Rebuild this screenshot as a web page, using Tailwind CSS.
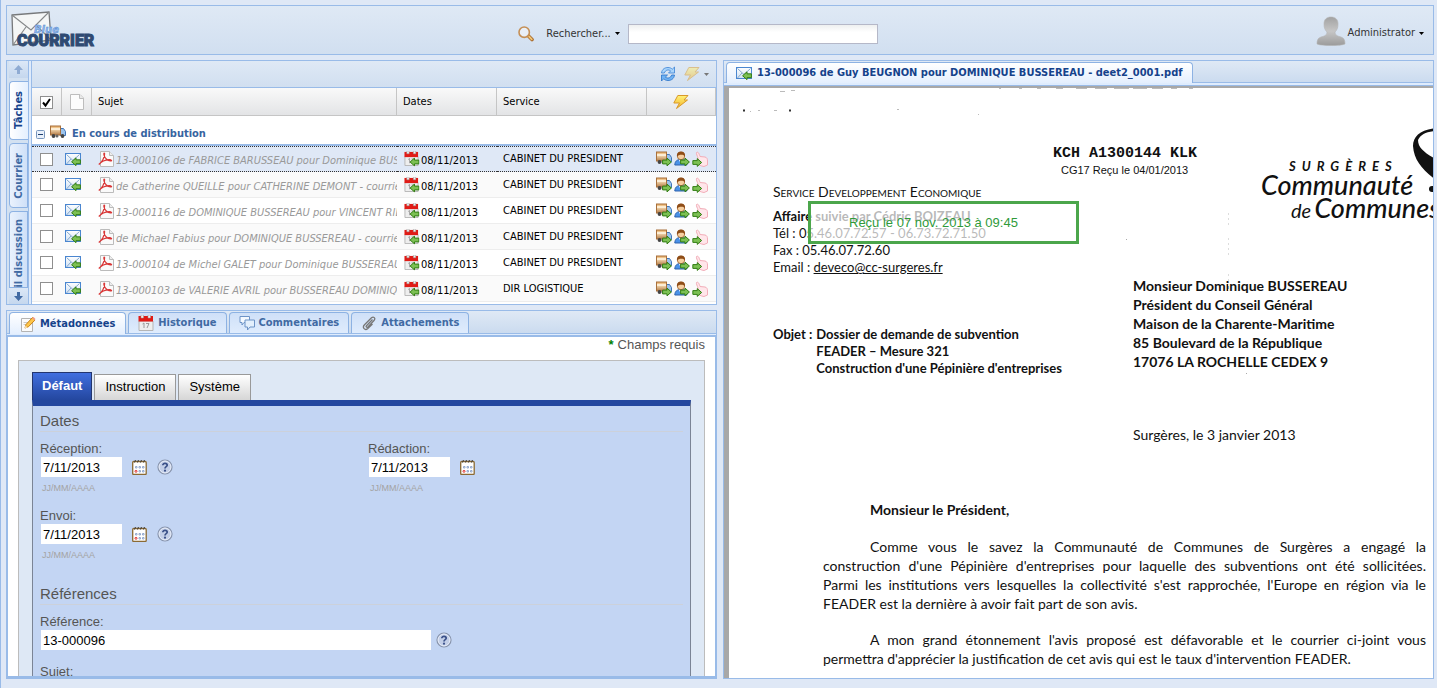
<!DOCTYPE html>
<html lang="fr">
<head>
<meta charset="utf-8">
<title>Blue Courrier</title>
<script src="https://cdn.jsdelivr.net/npm/@tailwindcss/browser@4"></script>
</head>
<body class="h-screen overflow-hidden bg-[#dfe8f6] font-['DejaVu_Sans_Condensed',Tahoma,sans-serif] text-[11px] leading-4 text-black">

<!-- Shared icons -->
<svg class="absolute size-0" aria-hidden="true">
  <defs>
    <linearGradient id="gMail" x1="0" y1="0" x2="0" y2="1"><stop offset="0" stop-color="#fff"/><stop offset="1" stop-color="#cfe0f2"/></linearGradient>
    <linearGradient id="gBolt" x1="0" y1="0" x2="0" y2="1"><stop offset="0" stop-color="#fff27a"/><stop offset="1" stop-color="#f5b325"/></linearGradient>
    <linearGradient id="gUser" x1="0" y1="0" x2="0" y2="1"><stop offset="0" stop-color="#a2a2a2"/><stop offset=".5" stop-color="#c6c6c6"/><stop offset="1" stop-color="#9b9b9b"/></linearGradient>
    <linearGradient id="gTruck" x1="0" y1="0" x2="0" y2="1"><stop offset="0" stop-color="#e8ac63"/><stop offset=".35" stop-color="#f6dcb4"/><stop offset="1" stop-color="#b27a45"/></linearGradient>
  </defs>
  <symbol id="arrowL" viewBox="0 0 10 9"><path d="M.6 4.5 5 .6V2.6H9.4V6.4H5V8.4Z" fill="#7cc053" stroke="#327d14"/></symbol>
  <symbol id="arrowR" viewBox="0 0 10 9"><path d="M9.4 4.5 5 .6V2.6H.6V6.4H5V8.4Z" fill="#7cc053" stroke="#327d14"/></symbol>
  <symbol id="mail" viewBox="0 0 17 15">
    <rect x=".5" y="1.5" width="15" height="11" fill="url(#gMail)" stroke="#4a86d0"/>
    <path d="M1.5 2.5 8 8.5 14.5 2.5M1.5 12 6 7M14.5 12 10 7" fill="none" stroke="#86a9cf"/>
    <use href="#arrowL" x="6" y="5" width="10" height="9.5"/>
  </symbol>
  <symbol id="page" viewBox="0 0 14 16">
    <path d="M.5.5H10L13.5 4V15.5H.5Z" fill="#fcfcfc" stroke="#bdbdbd"/><path d="M9.5.5V4.5H13.5" fill="#e9e9e9" stroke="#bdbdbd"/>
  </symbol>
  <symbol id="pdf" viewBox="0 0 16 16">
    <path d="M2.5.5H11.5L15.5 4.5V15.5H2.5Z" fill="#fafafa" stroke="#bbb"/><path d="M11.5.5V4.5H15.5" fill="#eee" stroke="#bbb"/>
    <path d="M.8 13.5C3.5 11.5 7 6.500 6.600 2.700C6.400 1.500 5.600 2.200 5.900 3.600C6.500 7 9.500 9.800 12.500 10C14.500 10 13.500 8.600 11 8.700C7.500 8.900 3.500 10.500.8 13.500Z" fill="none" stroke="#d93636" stroke-width="1.200"/>
  </symbol>
  <symbol id="cal" viewBox="0 0 16 16">
    <path d="M1 6H15V15.500H1Z" fill="#eee" stroke="#b5b5b5"/><path d="M.5 1H15V6.500H.5Z" fill="#e01b16"/>
    <path d="M3 0H5.500V3H3ZM10 0H12.500V3H10Z" fill="#f2f2f2" stroke="#999" stroke-width=".5"/>
    <path d="M4.500 9 6 8V13M8 8.500H11L9 13" fill="none" stroke="#9a9a9a" stroke-width="1"/>
  </symbol>
  <symbol id="calIn" viewBox="0 0 16 16"><use href="#cal" width="15" height="15"/><use href="#arrowL" x="5.500" y="6.500" width="10" height="9"/></symbol>
  <symbol id="truck" viewBox="0 0 16 14">
    <path d="M10 3.500H13.500L15.500 6.500V10.500H10Z" fill="#9cc4ee" stroke="#3f74b8"/>
    <rect x=".5" y="1" width="10" height="9" fill="url(#gTruck)" stroke="#a8703d"/><path d="M1 4H10" stroke="#fff6e4" stroke-width="1.500"/>
    <circle cx="3.500" cy="11" r="1.900" fill="#444"/><circle cx="12.500" cy="11" r="1.900" fill="#444"/><circle cx="7" cy="11" r="1.500" fill="#666"/>
  </symbol>
  <symbol id="truckOut" viewBox="0 0 16 16"><use href="#truck" width="16" height="14"/><use href="#arrowR" x="6" y="6.500" width="10" height="9"/></symbol>
  <symbol id="userOut" viewBox="0 0 16 16">
    <path d="M.8 14C1 10 3 8.500 7 8.500S12.500 10 13 14Z" fill="#4a92e8" stroke="#2e62ad"/><path d="M5 9 7 13 9 9Z" fill="#fff"/>
    <circle cx="7" cy="5" r="3.700" fill="#f6cfa0" stroke="#9a5a22" stroke-width=".800"/><path d="M3 5.500C2.500 1.500 5 .500 7 .500S11.500 1.500 11 5.500C10 3 5 3 3 5.500Z" fill="#8f4d17"/>
    <use href="#arrowR" x="6" y="6.500" width="10" height="9"/>
  </symbol>
  <symbol id="handOut" viewBox="0 0 16 16">
    <path d="M4.500 1.500C6 .500 7 2 8 5.500L13 6C15 6.500 15.500 8 15.500 10V14L12 15.500C9 15 6 14 5.500 12L6 7C5.500 5 4 3 4.500 1.500Z" fill="#ffe6ea" stroke="#f2adb8"/>
    <use href="#arrowR" x="0" y="7" width="10.500" height="9"/>
  </symbol>
  <symbol id="bolt" viewBox="0 0 16 16"><path d="M4.800 1.500H15L11 6H14.500L3.500 14.500 6.500 9H.800Z" fill="url(#gBolt)" stroke="#d9992a" stroke-linejoin="round"/></symbol>
  <symbol id="datePick" viewBox="0 0 15 16">
    <rect x=".700" y="2.500" width="13.500" height="13" rx="1" fill="#fff" stroke="#8b6a33" stroke-width="1.300"/>
    <path d="M2.500 3.500 3.500 1M5.500 3.500 6.500 1M8.500 3.500 9.500 1M11.500 3.500 12.500 1" fill="none" stroke="#333" stroke-width=".9"/>
    <path d="M3.500 7.500H5V9H3.500ZM7 7.500H8.500V9H7ZM10.500 7.500H12V9H10.500ZM7 11.500H8.500V13H7ZM10.500 11.500H12V13H10.500Z" fill="#fff" stroke="#8aa3cc" stroke-width=".900"/>
    <circle cx="4" cy="12.300" r="1" fill="#fff" stroke="#e02b2b"/>
  </symbol>
  <symbol id="help" viewBox="0 0 16 16">
    <circle cx="8" cy="8" r="7" fill="#c3cfe8" stroke="#8793ab" stroke-width="1.200"/><circle cx="8" cy="8" r="5.900" fill="none" stroke="#e5ebf7"/>
    <path d="M5.800 6.300C5.800 3.800 10.200 3.800 10.200 6.300C10.200 7.700 8 7.700 8 9.500" fill="none" stroke="#3a5088" stroke-width="1.700"/><circle cx="8" cy="11.700" r="1.100" fill="#3a5088"/>
  </symbol>
</svg>

<div class="flex h-full flex-col gap-[5px] border-l border-[#99bbe8] pt-[5px] pr-[3px] pb-[9px] pl-[5px]">

  <!-- Banner -->
  <header class="grid h-[50px] shrink-0 grid-cols-[1fr_auto_1fr] items-center border border-[#99bbe8] bg-linear-to-b from-[#dfe9f5] to-[#d1dff0]">
    <a href="#" aria-label="Blue Courrier" class="ml-1 w-[90px]">
      <svg class="h-[40px] w-[90px]" viewBox="0 0 90 40">
        <path d="M1 5 38 2 40 30 2 35Z" fill="#f4f6f6" stroke="#77797b" stroke-width="1.300"/>
        <path d="M1 5 20 20 38 2M2 35 15 17M40 30 25 15" fill="none" stroke="#85888a" stroke-width="1.100"/>
        <text x="6" y="36" font-family="Roboto, sans-serif" font-weight="900" font-size="16" fill="#2f4a72" stroke="#2f4a72" stroke-width="1">COURRIER</text>
        <text x="23" y="23" font-family="DejaVu Sans, sans-serif" font-weight="700" font-style="italic" font-size="10" fill="#8fb8ee" stroke="#4f83c9" stroke-width=".400">Blue</text>
      </svg>
    </a>
    <form class="mt-[7px] mr-[44px] flex items-center">
      <svg class="mr-3 size-4" viewBox="0 0 16 16"><path d="M10.500 10 14 13.500" stroke="#a8692c" stroke-width="3.600" stroke-linecap="round"/><path d="M11 10.500 13.800 13.300" stroke="#f0c574" stroke-width="1.800" stroke-linecap="round"/><circle cx="6.200" cy="6.200" r="5.200" fill="#e9eff7" stroke="#c58f55" stroke-width="1.600"/></svg>
      <button type="button" class="flex items-center gap-1 text-[#333]">Rechercher...<svg class="h-[3px] w-[5px]" viewBox="0 0 5 3"><path d="M0 0H5L2.500 3Z" fill="#000"/></svg></button>
      <input type="text" aria-label="Rechercher" class="ml-2 h-5 w-[250px] border border-[#b5b8c8] bg-linear-to-b from-[#eef0f0] to-white to-40% px-1">
    </form>
    <button type="button" class="mr-[9px] flex items-center gap-1 justify-self-end pt-[2px] text-[#333]">
      <svg class="h-[30px] w-[30px]" viewBox="0 0 30 30"><path d="M8 8C8 3 11 1 15 1S22 3 22 8C22 12 21 14 19 16C19 19 21 20 25 21C28 22 29 24 29 28C25 30 5 30 1 28C1 24 2 22 5 21C9 20 11 19 11 16C9 14 8 12 8 8Z" fill="url(#gUser)" stroke="#b3b3b3" stroke-width=".600"/></svg>
      <span class="-ml-[2px] pt-1">Administrator</span><svg class="mt-1 h-[3px] w-[5px]" viewBox="0 0 5 3"><path d="M0 0H5L2.500 3Z" fill="#000"/></svg>
    </button>
  </header>

  <div class="grid min-h-0 flex-1 grid-cols-2 gap-[6px]">

    <div class="flex min-h-0 min-w-0 flex-col gap-[5px]">

      <!-- Task list with its vertical tabs -->
      <section class="flex h-[245px] shrink-0 border border-[#99bbe8]">
        <nav class="flex w-[25px] shrink-0 flex-col border-r border-[#99bbe8] bg-[#dfebfb]">
          <div class="mr-[2px] flex min-h-0 flex-1 flex-col gap-[3px] overflow-hidden border-r border-[#99bbe8] bg-[#d3e1f1] pl-[2px]">
            <button type="button" aria-label="Monter" class="grid h-[17px] shrink-0 place-items-center bg-linear-to-b from-[#dce8f7] to-[#c5d7ee]"><svg class="size-[9px]" viewBox="0 0 9 9"><path d="M4.500 0 9 5H6V9H3V5H0Z" fill="#8fabd3"/></svg></button>
            <button type="button" class="flex h-[59px] shrink-0 items-center justify-center rounded-l border border-r-0 border-[#8db2e3] bg-linear-to-r from-white to-[#e4effe] font-bold text-[#15428b]"><span class="rotate-180 [writing-mode:vertical-rl]">Tâches</span></button>
            <button type="button" class="flex h-[65px] shrink-0 items-center justify-center rounded-l border border-[#8db2e3] bg-linear-to-r from-[#eaf2fd] to-[#cfe0f8] font-bold text-[#416aa3]"><span class="rotate-180 [writing-mode:vertical-rl]">Courrier</span></button>
            <button type="button" class="flex min-h-0 flex-1 items-start justify-center overflow-hidden rounded-tl border border-b-0 border-[#8db2e3] bg-linear-to-r from-[#eaf2fd] to-[#cfe0f8] pt-[7px] font-bold text-[#416aa3]"><span class="rotate-180 whitespace-nowrap [writing-mode:vertical-rl]">il discussion</span></button>
            <button type="button" aria-label="Descendre" class="-mt-[3px] grid h-[17px] shrink-0 place-items-center border-t border-[#8db2e3] bg-linear-to-b from-[#dce8f7] to-[#c5d7ee]"><svg class="size-[9px]" viewBox="0 0 9 9"><path d="M4.500 9 9 4H6V0H3V4H0Z" fill="#416aa3"/></svg></button>
          </div>
        </nav>

        <div class="flex min-w-0 flex-1 flex-col overflow-hidden bg-white">
          <div class="flex h-[27px] shrink-0 items-center justify-end border-b border-[#99bbe8] bg-linear-to-b from-[#dfe9f5] to-[#d1dff0] pr-[7px]">
            <button type="button" aria-label="Actualiser" class="mr-2"><svg class="size-4" viewBox="0 0 16 16"><path d="M1.500 7C2 3 5 1.500 8 1.500C10 1.500 11.300 2.200 12.300 3.200L14.500 1V7H8.500L10.600 4.900C8.500 3.200 5.500 3.800 4.300 7Z" fill="#a9d4fb" stroke="#3a82d4" stroke-width=".800"/><path d="M14.500 9C14 13 11 14.500 8 14.500C6 14.500 4.700 13.800 3.700 12.800L1.500 15V9H7.500L5.400 11.100C7.500 12.800 10.500 12.200 11.700 9Z" fill="#6fb2f3" stroke="#2a72c8" stroke-width=".800"/></svg></button>
            <button type="button" aria-label="Actions" disabled class="flex items-center gap-1"><svg class="size-4 opacity-50"><use href="#bolt"/></svg><svg class="h-[3px] w-[5px]" viewBox="0 0 5 3"><path d="M0 0H5L2.500 3Z" fill="#777"/></svg></button>
          </div>

          <table class="w-full table-fixed border-separate border-spacing-0 text-left">
            <colgroup><col class="w-[30px]"><col class="w-[30px]"><col class="w-[305px]"><col class="w-[100px]"><col class="w-[150px]"><col></colgroup>
            <thead>
              <tr class="h-7 [&>th]:border-r [&>th]:border-b [&>th]:border-[#c5c5c5] [&>th]:bg-linear-to-b [&>th]:from-[#f9f9f9] [&>th]:to-[#e3e4e6] [&>th]:p-0 [&>th]:pt-px [&>th]:font-normal">
                <th><span class="ml-2 grid size-[13px]"><input type="checkbox" checked aria-label="Tout sélectionner" class="peer col-start-1 row-start-1 size-[13px] appearance-none border border-[#8f8f8f] bg-white"><svg class="pointer-events-none col-start-1 row-start-1 size-[13px] opacity-0 peer-checked:opacity-100" viewBox="0 0 13 13"><path d="M3 6.500 5.500 9.500 10 3" fill="none" stroke="#000" stroke-width="2"/></svg></span></th>
                <th aria-label="Type"><svg class="mx-auto h-4 w-[14px]"><use href="#page"/></svg></th>
                <th><span class="pl-[6px]">Sujet</span></th>
                <th><span class="pl-[6px]">Dates</span></th>
                <th><span class="pl-[6px]">Service</span></th>
                <th aria-label="Actions"><svg class="mx-auto size-4"><use href="#bolt"/></svg></th>
              </tr>
            </thead>
            <tbody id="rows">
              <tr class="h-[30px]">
                <th colspan="6" class="border-b-2 border-[#99bbe8] p-0 pt-2 text-[#3764a0]">
                  <span class="flex items-center pl-1">
                    <button type="button" aria-label="Réduire le groupe" class="mr-[5px]"><svg class="size-[9px]" viewBox="0 0 9 9"><rect x=".500" y=".500" width="8" height="8" rx="1" fill="#e8f0fb" stroke="#7896bd"/><path d="M2 4.500H7" stroke="#1d3f6f"/></svg></button>
                    <svg class="mr-[6px] mb-1 h-[14px] w-4"><use href="#truck"/></svg>En cours de distribution
                  </span>
                </th>
              </tr>
            </tbody>
          </table>
        </div>
      </section>

      <!-- Record details -->
      <section class="flex min-h-0 flex-1 flex-col border border-[#99bbe8]">
        <nav class="flex h-[23px] shrink-0 items-end gap-[2px] border-b border-[#99bbe8] bg-linear-to-b from-[#dfe9f5] to-[#cbdbef] pl-[2px] font-bold text-[#416aa3]">
          <button type="button" class="-mb-px flex h-[22px] items-center rounded-t border border-b-0 border-[#8db2e3] bg-linear-to-b from-white to-[#e4effe] px-[10px] text-[#15428b]"><svg class="mr-1 size-4" viewBox="0 0 16 16"><path d="M1.500 2.500H12.500V15.500H1.500Z" fill="#fbfbfb" stroke="#b3b3b3"/><path d="M3.500 6.500H9M3.500 8.500H7" stroke="#ccc"/><path d="M5 12 6 8.500 12.500 1.500 15 4 8.500 10.700Z" fill="#fdc64b" stroke="#c98216"/><path d="M12 2 14.500 4.500 15.500 3 13.500 1Z" fill="#f09a86"/><path d="M4.500 12.500 5.500 9.500 7.500 11.500Z" fill="#f5deb5"/></svg>Métadonnées</button>
          <button type="button" class="flex h-[21px] items-center rounded-t border border-b-0 border-[#8db2e3] bg-linear-to-b from-[#cfe0f8] to-[#dfecfd] px-[9px]"><svg class="mr-1 size-4"><use href="#cal"/></svg>Historique</button>
          <button type="button" class="flex h-[21px] items-center rounded-t border border-b-0 border-[#8db2e3] bg-linear-to-b from-[#cfe0f8] to-[#dfecfd] px-[9px]"><svg class="mr-1 size-4" viewBox="0 0 16 16"><path d="M1 1.500H10.500V7.500H5L3 10V7.500H1Z" fill="#f4f9ff" stroke="#6d93c6" stroke-linejoin="round"/><path d="M6 5H15.500V12H11L8.500 15V12H6Z" fill="#e3effc" stroke="#6d93c6" stroke-linejoin="round"/></svg>Commentaires</button>
          <button type="button" class="flex h-[21px] items-center rounded-t border border-b-0 border-[#8db2e3] bg-linear-to-b from-[#cfe0f8] to-[#dfecfd] px-[9px]"><svg class="mr-1 size-4" viewBox="0 0 16 16"><path d="M11.500 4.500 5.500 10.700C4.500 11.800 5.800 13 6.900 12L13 5.500C15 3.300 12.500 1 10.500 2.800L3.500 9.800C.800 12.500 4 16 6.800 13.500L11.500 9" fill="none" stroke="#777" stroke-width="1.300"/></svg>Attachements</button>
        </nav>
        <div class="h-px shrink-0 bg-[#dfecfd]"></div>
        <div class="min-h-0 flex-1 overflow-hidden border-x border-y-2 border-[#99bbe8] bg-white px-[10px] font-['Liberation_Sans',Arial,sans-serif] text-[13px] text-[#555]">
          <p class="text-right"><span class="mr-1 font-bold text-[#008000]">*</span>Champs requis</p>
          <div class="mt-[7px] border border-[#bcbcbc] bg-[#dee8f5] px-[13px] pt-[11px]">
            <div class="flex items-end gap-[2px] text-black">
              <button type="button" class="h-7 border border-b-0 border-[#23356e] bg-linear-to-b from-[#416fdf] to-[#24479f] px-[9px] pb-[2px] font-bold text-white">Défaut</button>
              <button type="button" class="h-[26px] border border-b-0 border-[#999] bg-linear-to-b from-white to-[#d6d6d6] px-[10px] pb-[2px]">Instruction</button>
              <button type="button" class="h-[26px] border border-b-0 border-[#999] bg-linear-to-b from-white to-[#d6d6d6] px-[10px] pb-[2px]">Système</button>
            </div>
            <form class="border-x border-t-[6px] border-x-[#7b8495] border-t-[#24479f] bg-[#c3d5f3] px-[7px] pt-[7px] pb-8">
              <h2 class="border-b border-[#ccd1da] pb-[2px] text-[15px]">Dates</h2>
              <div class="mt-[9px] grid grid-cols-[328px_1fr] gap-y-3">
                <div>
                  <label for="reception" class="block">Réception:</label>
                  <div class="flex items-center"><input id="reception" value="7/11/2013" class="ml-px h-5 w-[81px] bg-white px-[2px] text-black"><button type="button" aria-label="Choisir une date" class="ml-[10px]"><svg class="h-4 w-[15px]"><use href="#datePick"/></svg></button><button type="button" aria-label="Aide" class="ml-[10px]"><svg class="size-4"><use href="#help"/></svg></button></div>
                  <p class="mt-[3px] pl-[2px] text-[9px] text-[#a3a3a3]">JJ/MM/AAAA</p>
                </div>
                <div>
                  <label for="redaction" class="block">Rédaction:</label>
                  <div class="flex items-center"><input id="redaction" value="7/11/2013" class="ml-px h-5 w-[81px] bg-white px-[2px] text-black"><button type="button" aria-label="Choisir une date" class="ml-[10px]"><svg class="h-4 w-[15px]"><use href="#datePick"/></svg></button></div>
                  <p class="mt-[3px] pl-[2px] text-[9px] text-[#a3a3a3]">JJ/MM/AAAA</p>
                </div>
                <div>
                  <label for="envoi" class="block">Envoi:</label>
                  <div class="flex items-center"><input id="envoi" value="7/11/2013" class="ml-px h-5 w-[81px] bg-white px-[2px] text-black"><button type="button" aria-label="Choisir une date" class="ml-[10px]"><svg class="h-4 w-[15px]"><use href="#datePick"/></svg></button><button type="button" aria-label="Aide" class="ml-[10px]"><svg class="size-4"><use href="#help"/></svg></button></div>
                  <p class="mt-[3px] pl-[2px] text-[9px] text-[#a3a3a3]">JJ/MM/AAAA</p>
                </div>
              </div>
              <h2 class="mt-[23px] border-b border-[#ccd1da] pb-[2px] text-[15px]">Références</h2>
              <label for="reference" class="mt-[9px] block">Référence:</label>
              <div class="flex items-center"><input id="reference" value="13-000096" class="ml-px h-5 w-[390px] bg-white px-[2px] text-black"><button type="button" aria-label="Aide" class="ml-[5px]"><svg class="size-4"><use href="#help"/></svg></button></div>
              <label for="sujet" class="mt-[14px] block">Sujet:</label>
              <input id="sujet" class="ml-px h-5 w-[390px] bg-white px-[2px] text-black">
            </form>
          </div>
        </div>
      </section>
    </div>

    <!-- Document preview -->
    <section class="flex min-h-0 min-w-0 flex-col border border-[#99bbe8]">
      <nav class="flex h-[22px] shrink-0 items-end border-b border-[#99bbe8] bg-linear-to-b from-[#dfe9f5] to-[#cbdbef] pl-[2px]">
        <button type="button" class="-mb-px flex h-[21px] items-center rounded-t border border-b-0 border-[#8db2e3] bg-linear-to-b from-white to-[#e4effe] px-[9px] font-bold text-[#15428b]"><svg class="mr-1 h-[15px] w-[17px] shrink-0"><use href="#mail"/></svg>13-000096 de Guy BEUGNON pour DOMINIQUE BUSSEREAU - deet2_0001.pdf</button>
      </nav>
      <div class="h-[2px] shrink-0 bg-[#dfecfd]"></div>
      <div class="min-h-0 flex-1 border-t border-[#99bbe8] bg-[#a8a8a8] pt-[2px] pl-[5px]">
        <article class="relative h-full overflow-hidden bg-white pr-[7px] pl-[44px] font-['Lato','Open_Sans',sans-serif] text-[14px] leading-[19px] text-[#111]">
          <!-- Scanner specks -->
          <svg class="absolute top-0 left-0 h-[300px] w-[640px]" viewBox="0 0 640 300" aria-hidden="true"><path d="M270 .500H272M290 .500H293M308 .500H312M327 .500H334M347 .500H358M366 .500H378M385 .500H400M404 .500H418M423 .500H434M442 .500H448M460 .500H464" stroke="#bbb"/><path d="M14 22.500H16M60 22.500H62" stroke="#333" stroke-width="2"/><path d="M21 23.500H22M29 22.500H31M45 22.500H48M51 3.500H56M62 2.500H66M168 21.500H170M249 26.500H250" stroke="#bbb"/><path d="M499.500 125V139M499.500 150V170M499.500 186V205" stroke="#ddd" stroke-dasharray="2 3"/><path d="M517 285.500H518M397 151.500H398" stroke="#aaa"/></svg>

          <div class="grid grid-cols-[280px_208px_auto] pt-[56px]">
            <div class="pt-[39px] text-[13px] leading-[17px]">
              <p class="mb-2 text-[14px] [font-variant-caps:small-caps]">Service Developpement Economique</p>
              <p class="font-bold">Affaire suivie par Cédric BOIZEAU</p>
              <p>Tél : 05.46.07.72.57 - 06.73.72.71.50</p>
              <p>Fax : 05.46.07.72.60</p>
              <p>Email : <a href="#" class="underline">deveco@cc-surgeres.fr</a></p>
            </div>
            <div>
              <p class="font-['Liberation_Mono',monospace] text-[15px] leading-5 font-bold">KCH A1300144 KLK</p>
              <p class="pl-2 font-['Liberation_Sans',sans-serif] text-[11px] leading-3">CG17 Reçu le 04/01/2013</p>
            </div>
            <div class="relative whitespace-nowrap italic">
              <p class="pt-[14px] pl-7 text-[13px] leading-4 font-bold tracking-[6px]">SURGÈRES</p>
              <p class="text-[27px] leading-[22px] font-medium">Communauté</p>
              <p class="pl-[30px] leading-6"><span class="text-[20px]">de</span> <span class="text-[27px] font-medium">Communes</span></p>
              <svg class="absolute top-[-16px] left-[150px] h-[70px] w-[30px]" viewBox="0 0 30 70" aria-hidden="true"><path d="M26 0C10 1 2 8 2 18C3 33 12 42 26 53V32C14 25 7 20 7 12C10 6 16 3 26 3Z" fill="#111"/><circle cx="21" cy="61" r="3" fill="#111"/></svg>
            </div>
          </div>

          <div class="grid grid-cols-[360px_auto] font-bold">
            <div class="flex gap-1 pt-[50px] text-[13px] leading-[17px]">
              <p>Objet :</p>
              <p>Dossier de demande de subvention<br>FEADER – Mesure 321<br>Construction d'une Pépinière d'entreprises</p>
            </div>
            <address class="not-italic">Monsieur Dominique BUSSEREAU<br>Président du Conseil Général<br>Maison de la Charente-Maritime<br>85 Boulevard de la République<br>17076 LA ROCHELLE CEDEX 9</address>
          </div>

          <p class="mt-12 pl-[360px]">Surgères, le 3 janvier 2013</p>

          <div class="mt-14 pl-[50px]">
            <p class="indent-[47px] font-bold">Monsieur le Président,</p>
            <p class="mt-[18px] indent-[47px]">
              <span class="block [text-align-last:justify]">Comme vous le savez la Communauté de Communes de Surgères a engagé la</span>
              <span class="block indent-0 [text-align-last:justify]">construction d'une Pépinière d'entreprises pour laquelle des subventions ont été sollicitées.</span>
              <span class="block indent-0 [text-align-last:justify]">Parmi les institutions vers lesquelles la collectivité s'est rapprochée, l'Europe en région via le</span>
              <span class="block indent-0">FEADER est la dernière à avoir fait part de son avis.</span>
            </p>
            <p class="mt-[17px] indent-[47px]">
              <span class="block [text-align-last:justify]">A mon grand étonnement l'avis proposé est défavorable et le courrier ci-joint vous</span>
              <span class="block indent-0">permettra d'apprécier la justification de cet avis qui est le taux d'intervention FEADER.</span>
            </p>
          </div>

          <!-- Reception stamp laid over the letter -->
          <div class="absolute top-[113px] left-[79px] flex h-[43px] w-[271px] items-center border-[3px] border-[#4ba64b] bg-white/70 pl-[38px] font-['Liberation_Sans',sans-serif] text-[13px] text-[#2f9a3a]">Reçu le 07 nov. 2013 à 09:45</div>
        </article>
      </div>
    </section>
  </div>
</div>

<template id="row">
  <tr class="h-[26px] [&>td]:border-b [&>td]:p-0">
    <td><input type="checkbox" class="ml-2 block size-[13px] appearance-none border border-[#8f8f8f] bg-white"></td>
    <td><svg class="ml-[3px] h-[15px] w-[17px]"><use href="#mail"/></svg></td>
    <td><div class="flex items-center pl-[6px] whitespace-nowrap text-[#999] italic"><svg class="mr-[2px] size-4 shrink-0"><use href="#pdf"/></svg><a href="#" class="subject min-w-0 overflow-hidden pt-1"></a></div></td>
    <td><div class="flex items-center pl-[7px]"><svg class="mr-px size-4"><use href="#calIn"/></svg><span class="pt-1">08/11/2013</span></div></td>
    <td class="service"></td>
    <td><div class="flex gap-[2px] pl-[9px]"><button type="button" aria-label="Distribuer"><svg class="size-4"><use href="#truckOut"/></svg></button><button type="button" aria-label="Attribuer"><svg class="size-4"><use href="#userOut"/></svg></button><button type="button" aria-label="Valider"><svg class="size-4"><use href="#handOut"/></svg></button></div></td>
  </tr>
</template>
<script>
  const data = [
    ["13-000106 de FABRICE BARUSSEAU pour Dominique BUSS", "CABINET DU PRESIDENT"],
    ["de Catherine QUEILLE pour CATHERINE DEMONT - courrie", "CABINET DU PRESIDENT"],
    ["13-000116 de DOMINIQUE BUSSEREAU pour VINCENT RID", "CABINET DU PRESIDENT"],
    ["de Michael Fabius pour DOMINIQUE BUSSEREAU - courrie", "CABINET DU PRESIDENT"],
    ["13-000104 de Michel GALET pour Dominique BUSSEREAU -", "CABINET DU PRESIDENT"],
    ["13-000103 de VALERIE AVRIL pour BUSSEREAU DOMINIQ", "DIR LOGISTIQUE"]
  ];
  const selected = ["bg-[#dfe8f6]", "[&>td]:border-t", "[&>td]:border-dotted", "[&>td]:border-[#333]"];
  const body = document.getElementById("rows"), tpl = document.getElementById("row");
  data.forEach(([subject, service], i) => {
    const tr = tpl.content.firstElementChild.cloneNode(true);
    tr.querySelector(".subject").textContent = subject;
    tr.querySelector("input").setAttribute("aria-label", subject);
    const s = document.createElement("span");
    s.className = "pl-[6px]";
    s.textContent = service;
    tr.querySelector(".service").append(s);
    if (i === 0) tr.classList.add(...selected);
    else tr.classList.add("[&>td]:border-[#ededed]");
    if (i % 2) tr.classList.add("bg-[#fafafa]");
    body.append(tr);
  });
</script>
</body>
</html>
